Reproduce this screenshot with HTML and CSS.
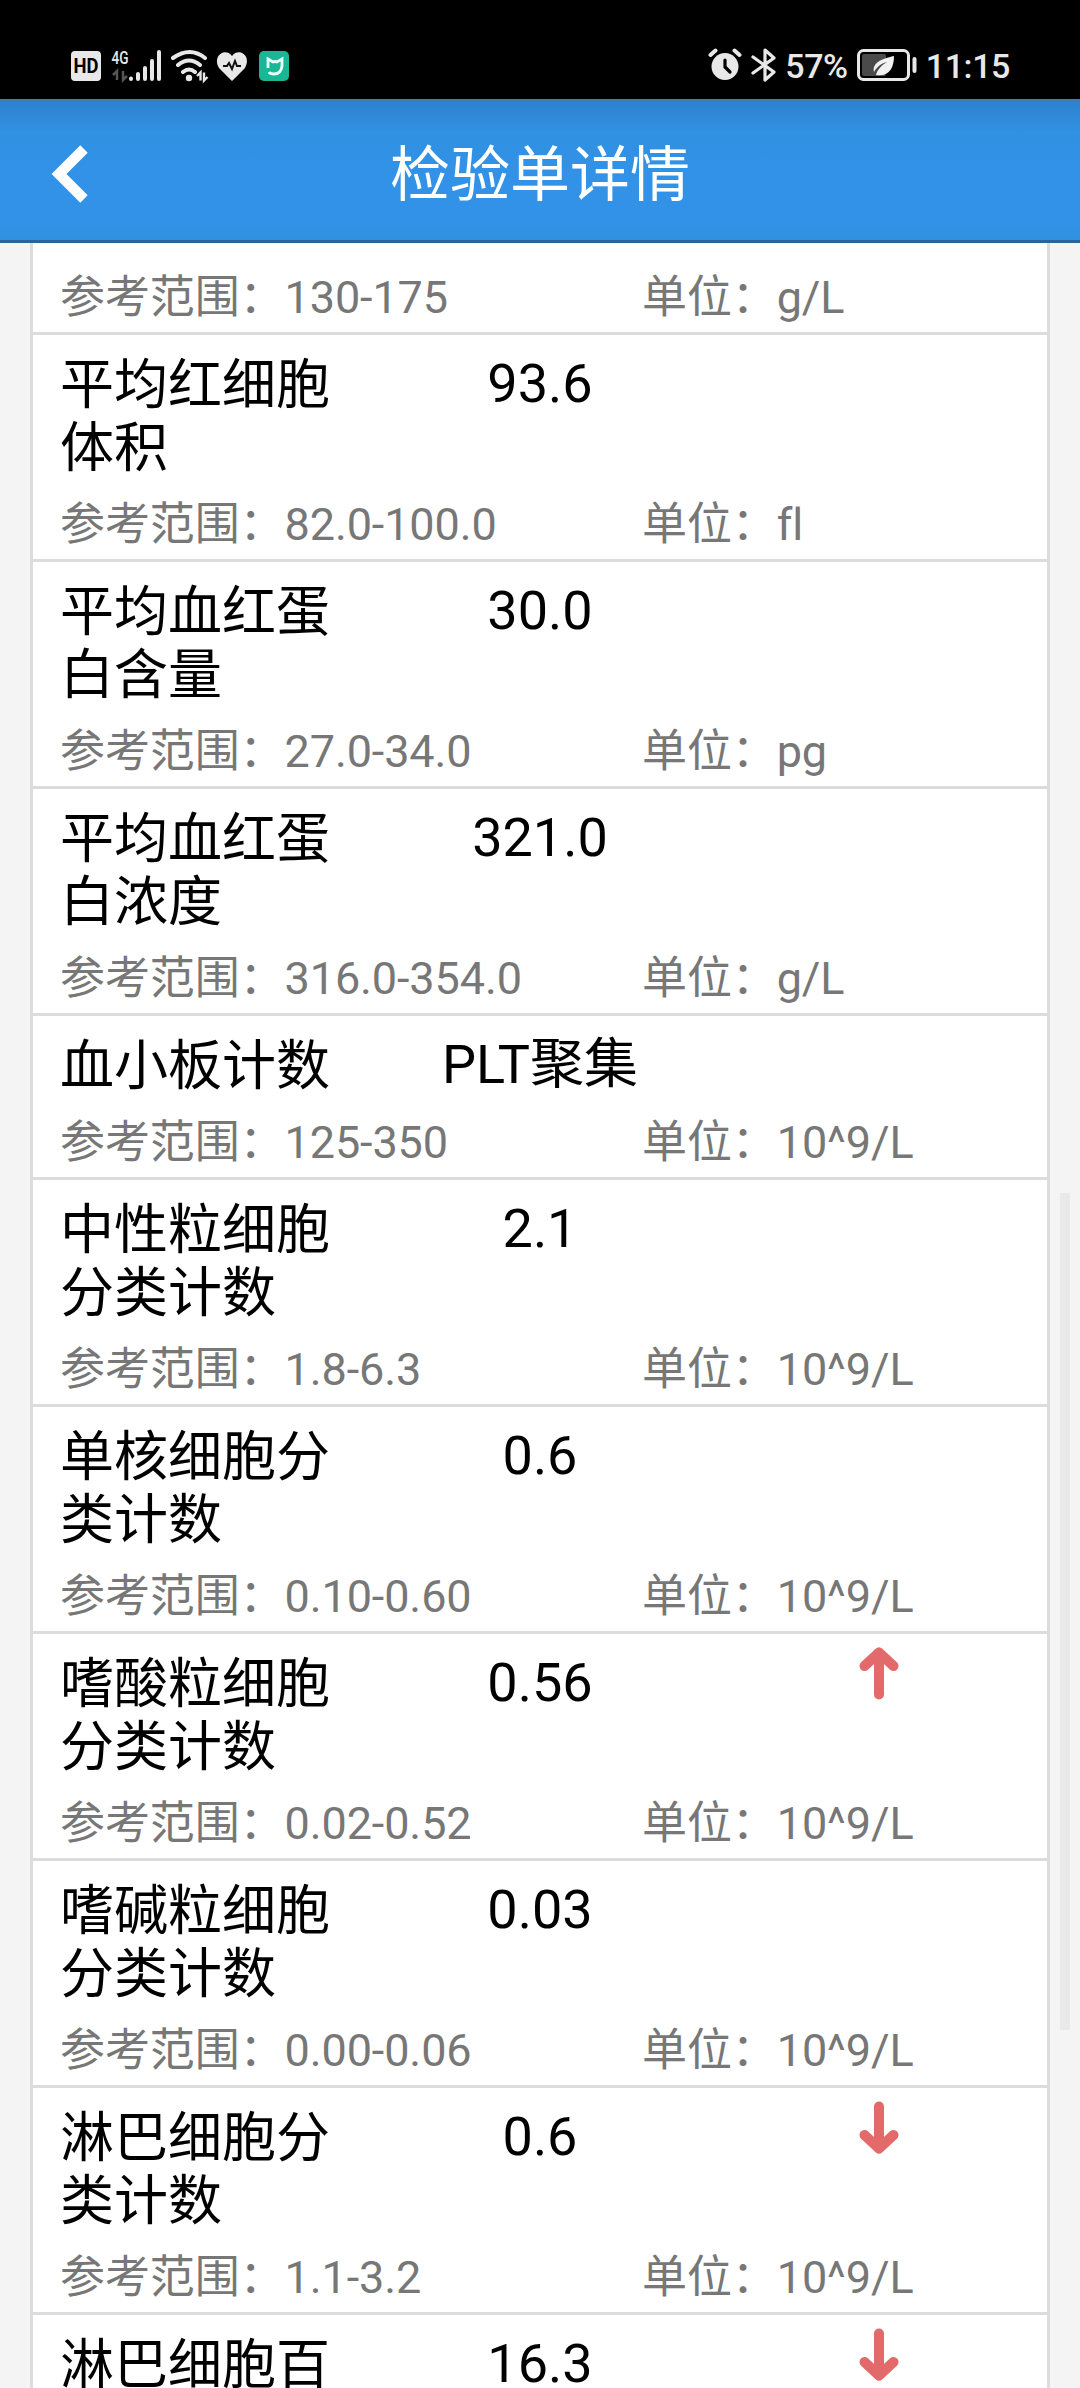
FILE: index.html
```html
<!DOCTYPE html>
<html lang="zh-CN">
<head>
  <meta charset="UTF-8">
  <meta name="viewport" content="width=device-width, initial-scale=1.0">
  <title>检验单详情</title>
  <link rel="stylesheet" href="styles.css">
</head>
<body>
  <!-- Status bar -->
  <div class="status-bar">
    <div class="status-left">
      <svg class="icon-left" width="240" height="40" viewBox="0 0 240 40">
        <rect x="1" y="6" width="30" height="30" rx="4" fill="#e8e8e8"/>
        <text class="hd-text" x="16" y="28" textLength="25" lengthAdjust="spacingAndGlyphs">HD</text>
        <text class="net-text" x="50" y="19" textLength="17" lengthAdjust="spacingAndGlyphs">4G</text>
        <path d="M43 30l4-4v9M53 26v9l4-4" fill="none" stroke="#555" stroke-width="2.5"/>
        <g stroke="#e8e8e8" stroke-width="4" stroke-linecap="round">
          <path d="M61 33.5v.5M68 29v5M75 23v11M82 16v18M89 7v27"/>
        </g>
        <g fill="none" stroke="#e8e8e8" stroke-width="4" stroke-linecap="round">
          <path d="M103 13q17-12 32 0M108 20q11-9 22 0M113 27q6-5 12 0"/>
        </g>
        <circle cx="119" cy="33" r="3.2" fill="#e8e8e8"/>
        <path d="M127 31l3.500-3.500v8M134 27.500v8l3.500-3.500" fill="none" stroke="#e8e8e8" stroke-width="2.400"/>
        <path d="M162 36L149 23C142 11 155 2 162 11C169 2 182 11 175 23Z" fill="#e8e8e8"/>
        <path d="M153 21h4l2-3 3 6 3-8 2 5h4" fill="none" stroke="#111" stroke-width="2"/>
        <rect x="189" y="6" width="30" height="30" rx="5" fill="#19b795"/>
        <path d="M198 23v-9l5 3q2-1 4 0l5-3v7q-1 8-8 8-4 0-5-2" fill="none" stroke="#eafffa" stroke-width="2.800"/>
      </svg>
    </div>
    <div class="status-right">
      <svg class="alarm" width="34" height="34" viewBox="0 0 34 34">
        <circle cx="17" cy="18.500" r="13.500" fill="#e8e8e8"/>
        <path d="M2.500 7l5-4.500M31.500 7l-5-4.500" stroke="#e8e8e8" stroke-width="4" stroke-linecap="round"/>
        <path d="M17 12v7l5 5" fill="none" stroke="#000" stroke-width="3.200" stroke-linecap="round"/>
      </svg>
      <svg class="bluetooth" width="26" height="34" viewBox="0 0 26 34">
        <path d="M2 9l21 15-9 8V2l9 8L2 25" fill="none" stroke="#e8e8e8" stroke-width="3.200" stroke-linejoin="round" stroke-linecap="round"/>
      </svg>
      <span class="percent">57%</span>
      <svg class="battery" width="60" height="34" viewBox="0 0 60 34">
        <rect x="1.500" y="2.500" width="50" height="29" rx="5" fill="none" stroke="#e8e8e8" stroke-width="3"/>
        <rect x="5" y="6" width="24" height="22" rx="2" fill="#4a4a4a"/>
        <path d="M37 8C24 11 15 15 17 24C21 17 26 15 30 14C25 17 20 22 19 27C32 29 37 20 37 8Z" fill="#f2f2f2"/>
        <path d="M57.500 11v12" stroke="#e8e8e8" stroke-width="4" stroke-linecap="round"/>
      </svg>
      <span class="clock">11:15</span>
    </div>
  </div>

  <!-- Title bar -->
  <div class="header">
    <svg class="back" width="40" height="62" viewBox="0 0 40 62">
      <path d="M34 6L9 31L34 56" fill="none" stroke="#fff" stroke-width="10.500"/>
    </svg>
    <h1>检验单详情</h1>
  </div>

  <!-- Result list -->
  <div class="content">
    <div class="list">
      <div class="item item-first">
        <div class="detail"><div class="range">参考范围：130-175</div><div class="unit">单位：g/L</div></div>
      </div>
      <div class="item">
        <div class="result"><div class="name">平均红细胞体积</div><div class="value">93.6</div><div class="flag"></div></div>
        <div class="detail"><div class="range">参考范围：82.0-100.0</div><div class="unit">单位：fl</div></div>
      </div>
      <div class="item">
        <div class="result"><div class="name">平均血红蛋白含量</div><div class="value">30.0</div><div class="flag"></div></div>
        <div class="detail"><div class="range">参考范围：27.0-34.0</div><div class="unit">单位：pg</div></div>
      </div>
      <div class="item">
        <div class="result"><div class="name">平均血红蛋白浓度</div><div class="value">321.0</div><div class="flag"></div></div>
        <div class="detail"><div class="range">参考范围：316.0-354.0</div><div class="unit">单位：g/L</div></div>
      </div>
      <div class="item">
        <div class="result"><div class="name">血小板计数</div><div class="value">PLT聚集</div><div class="flag"></div></div>
        <div class="detail"><div class="range">参考范围：125-350</div><div class="unit">单位：10^9/L</div></div>
      </div>
      <div class="item">
        <div class="result"><div class="name">中性粒细胞分类计数</div><div class="value">2.1</div><div class="flag"></div></div>
        <div class="detail"><div class="range">参考范围：1.8-6.3</div><div class="unit">单位：10^9/L</div></div>
      </div>
      <div class="item">
        <div class="result"><div class="name">单核细胞分类计数</div><div class="value">0.6</div><div class="flag"></div></div>
        <div class="detail"><div class="range">参考范围：0.10-0.60</div><div class="unit">单位：10^9/L</div></div>
      </div>
      <div class="item">
        <div class="result">
          <div class="name">嗜酸粒细胞分类计数</div>
          <div class="value">0.56</div>
          <div class="flag">
            <svg width="42" height="54" viewBox="0 0 42 54"><path d="M21 48.500V8M6.500 20L21 6.500L35.500 20"/></svg>
          </div>
        </div>
        <div class="detail"><div class="range">参考范围：0.02-0.52</div><div class="unit">单位：10^9/L</div></div>
      </div>
      <div class="item">
        <div class="result"><div class="name">嗜碱粒细胞分类计数</div><div class="value">0.03</div><div class="flag"></div></div>
        <div class="detail"><div class="range">参考范围：0.00-0.06</div><div class="unit">单位：10^9/L</div></div>
      </div>
      <div class="item">
        <div class="result">
          <div class="name">淋巴细胞分类计数</div>
          <div class="value">0.6</div>
          <div class="flag">
            <svg width="42" height="54" viewBox="0 0 42 54"><path d="M21 6.500V47M6.500 35L21 48.500L35.500 35"/></svg>
          </div>
        </div>
        <div class="detail"><div class="range">参考范围：1.1-3.2</div><div class="unit">单位：10^9/L</div></div>
      </div>
      <div class="item">
        <div class="result">
          <div class="name">淋巴细胞百</div>
          <div class="value">16.3</div>
          <div class="flag">
            <svg width="42" height="54" viewBox="0 0 42 54"><path d="M21 6.500V47M6.500 35L21 48.500L35.500 35"/></svg>
          </div>
        </div>
      </div>
    </div>
    <div class="scrollbar"></div>
  </div>
</body>
</html>
```
FILE: styles.css
```css
* {
  box-sizing: border-box;
}

body {
  margin: 0;
  height: 2388px;
  display: flex;
  flex-direction: column;
  overflow: hidden;
  background-color: #f4f4f4;
  font-family: Roboto, "Noto Sans CJK SC", sans-serif;
}

/* Status bar */
.status-bar {
  height: 99px;
  flex: none;
  display: flex;
  justify-content: space-between;
  padding: 45px 70px 0;
  background-color: #000;
  color: #e8e8e8;
}

.status-left {
  display: flex;
}

.icon-left {
  display: block;
}

.hd-text {
  font-size: 21px;
  font-weight: bold;
  fill: #000;
  text-anchor: middle;
}

.net-text {
  font-size: 18px;
  font-weight: 500;
  fill: #e8e8e8;
  text-anchor: middle;
}

.status-right {
  display: flex;
  align-items: flex-start;
  font-size: 34px;
  font-weight: 500;
  line-height: 42px;
  letter-spacing: -0.4px;
}

.alarm,
.bluetooth,
.battery {
  margin-top: 3px;
}

.bluetooth {
  margin-left: 9px;
}

.percent {
  margin-left: 8px;
}

.battery {
  margin-left: 9px;
}

.clock {
  margin-left: 9px;
}

/* Title bar */
.header {
  position: relative;
  height: 144px;
  flex: none;
  display: flex;
  align-items: center;
  justify-content: center;
  border-top: 3px solid #427cac;
  border-bottom: 3px solid #2d6495;
  background: linear-gradient(#2e82cf, #3091e2 30px, #3192e8 80px, #3192e8 118px, #3191e0);
}

.header h1 {
  margin: 10px 0 0;
  color: #fff;
  font-size: 60px;
  font-weight: normal;
  line-height: 72px;
}

.back {
  position: absolute;
  left: 50px;
  top: 41px;
}

/* Result list */
.content {
  position: relative;
  flex: 1;
  overflow: hidden;
  padding: 0 30px;
}

.list {
  background-color: #fff;
  border-left: 3px solid #dcdcdc;
  border-right: 3px solid #dcdcdc;
}

.item {
  padding: 17px 27px 8px;
  border-bottom: 3px solid #dcdcdc;
}

.item-first {
  padding-top: 8px;
}

.result {
  display: grid;
  grid-template-columns: 270px 420px 1fr;
  color: #000;
  font-size: 54px;
  line-height: 63px;
}

.name {
  padding-top: 2px;
  margin-bottom: -2px;
}

.value {
  text-align: center;
}

.flag svg {
  display: block;
  margin: -5px 0 0 108px;
  fill: none;
  stroke: #e26a6a;
  stroke-width: 10;
  stroke-linecap: round;
  stroke-linejoin: round;
}

.detail {
  display: grid;
  grid-template-columns: 582px 1fr;
  margin-top: 20px;
  color: #777;
  font-size: 45px;
  line-height: 53px;
  letter-spacing: -0.1px;
}

.scrollbar {
  position: absolute;
  top: 950px;
  right: 10px;
  width: 10px;
  height: 837px;
  background-color: #e9e9e9;
}
```
